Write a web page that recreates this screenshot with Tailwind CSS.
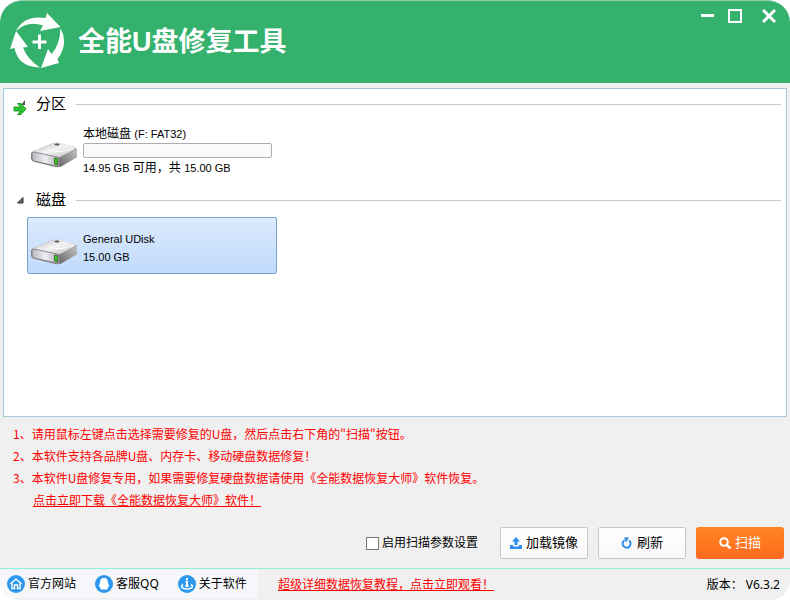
<!DOCTYPE html>
<html lang="zh-CN">
<head>
  <meta charset="utf-8" />
  <meta name="viewport" content="width=device-width,initial-scale=1" />
  <title>全能U盘修复工具</title>
  <script src="https://cdn.jsdelivr.net/npm/@tailwindcss/browser@4"></script>
</head>
<body class="bg-white">

<!-- shared drive icon -->
<svg class="absolute w-0 h-0" aria-hidden="true">
  <defs>
    <linearGradient id="top" x1="0" y1="0" x2="1" y2="1">
      <stop offset="0" stop-color="#bdbdbd" /><stop offset=".5" stop-color="#f4f4f4" /><stop offset="1" stop-color="#b9b9b9" />
    </linearGradient>
    <linearGradient id="side" x1="0" y1="1" x2="1" y2="0">
      <stop offset="0" stop-color="#666" /><stop offset="1" stop-color="#c5c5c5" />
    </linearGradient>
    <linearGradient id="front" x1="0" y1="0" x2="1" y2="0">
      <stop offset="0" stop-color="#b8b8bc" /><stop offset=".5" stop-color="#eeeef4" /><stop offset="1" stop-color="#a9a9ad" />
    </linearGradient>
    <symbol id="drive" viewBox="0 0 48 28">
      <path d="M0 13 Q0 11 3 10 L20 3 Q24 1 28 2 L43 6 Q46 7 46 10 V16 L31 25 Q27 27 24 26 L4 21 Q0 20 0 17Z" fill="#8a8a8a" />
      <path d="M1 11 L20 3 Q25 1 29 2 L43 6 Q46 7 43 9 L29 16 Q26 17 22 16Z" fill="url(#top)" />
      <path d="M28 17 L46 8 V16 L29 26Z" fill="url(#side)" />
      <path d="M1 12 Q1 11 3 11 L26 16 Q28 16 28 18 V24 Q28 26 25 25 L3 20 Q1 19 1 17Z" fill="url(#front)" stroke="#777" stroke-width=".8" />
      <path d="M17 9 Q30 13 43 7" fill="none" stroke="#fff" stroke-width="1" />
      <ellipse cx="26" cy="3.5" rx="2.500" ry="1" fill="#555" />
      <path d="M23.500 17 L26.500 17.500 V24 L23.500 23Z" fill="#3cc026" stroke="#1b4d14" stroke-width=".6" />
    </symbol>
  </defs>
</svg>

<div class="min-h-screen flex flex-col bg-[#f0f0f0] rounded-t-[22px] rounded-b-[20px] overflow-hidden text-xs text-black font-['Liberation_Sans','Noto_Sans_CJK_SC',sans-serif]">

  <header class="h-[83px] shrink-0 flex items-center bg-[#34b16d] border-t border-[#8fd0ac] rounded-t-[22px] pl-2 text-white">
    <svg class="w-[60px] h-[60px]" viewBox="0 0 60 60" fill="currentColor">
      <path d="M8 19 Q16 3 37.500 6 L39 1 L52.500 15 L32 19 L35 13.500 Q20 8 8 19Z" />
      <path d="M52.500 16 Q61 32 49.500 47 L51 51 L33 56 L40 37 L43.500 42 Q52 33 52.500 16Z" />
      <path d="M32 55.500 Q10 55 6.500 36 L2 37 L8 19 L20 35 L15 35.500 Q19 47 32 55.500Z" />
      <path d="M24.500 28.500 H30 V22.500 H33 V28.500 H38.500 V31.500 H33 V37 H30 V31.500 H24.500Z" />
    </svg>
    <h1 class="ml-[10px] text-[27px] leading-8 font-bold">全能U盘修复工具</h1>
    <div class="ml-auto self-start flex items-center gap-3 pr-[11px] pt-1">
      <button class="w-4 h-5" aria-label="最小化"><svg class="w-4 h-5" viewBox="0 0 16 20"><path d="M2 10.500 H15" stroke="#fff" stroke-width="3" /></svg></button>
      <button class="w-4 h-5" aria-label="最大化"><svg class="w-4 h-5" viewBox="0 0 16 20"><path d="M2 5 H14 V17 H2Z" fill="none" stroke="#fff" stroke-width="2" /></svg></button>
      <button class="ml-1 w-5 h-5" aria-label="关闭"><svg class="w-5 h-5" viewBox="0 0 20 20"><path d="M4 5 L16 17 M16 5 L4 17" stroke="#fff" stroke-width="3" /></svg></button>
    </div>
  </header>

  <main class="grow mx-[3px] mt-[5px] bg-white border border-[#a3cbd7]">
    <section>
      <div class="flex items-center h-[30px] pl-2 pr-[5px]">
        <svg class="w-4 h-4 mt-2" viewBox="0 0 16 16">
          <path d="M13 0 V5 H9Z" fill="#555" />
          <path d="M2 7 H8.500 L5.500 3.500 H9 L14 9 L9 14.500 H5.500 L8.500 11 H2Z" fill="#2cc531" stroke="#0c8a12" stroke-width=".8" />
        </svg>
        <h2 class="ml-2 text-[15px]">分区</h2>
        <div class="ml-[10px] grow border-t border-[#c8c8c8]"></div>
      </div>
      <div class="flex items-center h-14 w-[250px] ml-[23px] mt-1 pl-1">
        <svg class="w-12 h-7 mt-2"><use href="#drive" /></svg>
        <div class="ml-1 grow">
          <p class="leading-[18px]">本地磁盘 <span class="text-[11px]">(F: FAT32)</span></p>
          <div class="w-[189px] h-[15px] border border-[#adadad] rounded-xs bg-[#fafafa]"></div>
          <p class="mt-px leading-[18px]"><span class="text-[11px]">14.95 GB</span> 可用，共 <span class="text-[11px]">15.00 GB</span></p>
        </div>
      </div>
    </section>
    <section class="mt-[7px]">
      <div class="flex items-center h-7 pl-2 pr-[5px]">
        <svg class="w-4 h-4" viewBox="0 0 16 16"><path d="M11 5.500 V11 H5.500Z" fill="#666" stroke="#333" stroke-width="1" /></svg>
        <h2 class="ml-2 text-[15px]">磁盘</h2>
        <div class="ml-[10px] grow border-t border-[#c8c8c8]"></div>
      </div>
      <button class="flex items-center h-[57px] w-[250px] ml-[23px] mt-[3px] pl-[3px] text-left text-[11px] border border-[#7da2ce] rounded-xs bg-linear-to-b from-[#dceafd] to-[#c0dafc]">
        <svg class="w-12 h-7 mt-3"><use href="#drive" /></svg>
        <span class="ml-1 mt-1 leading-[18px]">General UDisk<br />15.00 GB</span>
      </button>
    </section>
  </main>

  <section class="pl-[13px] pt-[6px] leading-[22px] text-[#f00] font-['Noto_Sans_CJK_SC',sans-serif]">
    <p>1、请用鼠标左键点击选择需要修复的U盘，然后点击右下角的"扫描"按钮。</p>
    <p>2、本软件支持各品牌U盘、内存卡、移动硬盘数据修复！</p>
    <p>3、本软件U盘修复专用，如果需要修复硬盘数据请使用《全能数据恢复大师》软件恢复。</p>
    <p class="pl-5"><a href="#" class="underline">点击立即下载《全能数据恢复大师》软件！</a></p>
  </section>

  <div class="flex items-center justify-end gap-[10px] pt-4 pb-[9px] pr-[6px] text-[13px]">
    <label class="flex items-center gap-[3px] mr-3 text-xs">
      <input type="checkbox" class="appearance-none w-[13px] h-[13px] bg-white border border-[#777]" />
      启用扫描参数设置
    </label>
    <button class="flex items-center justify-center gap-1 w-[88px] h-8 bg-linear-to-b from-white to-[#f8f8f8] border border-[#c6c8cc] rounded-xs">
      <svg class="w-3 h-3" viewBox="0 0 12 12" fill="#2b8eea"><path d="M6 0 L10 4.500 H7.500 V8 H4.500 V4.500 H2Z" /><path d="M0 8 H3 V9.500 H9 V8 H12 V12 H0Z" /></svg>
      加载镜像
    </button>
    <button class="flex items-center justify-center gap-1 w-[88px] h-8 bg-linear-to-b from-white to-[#f8f8f8] border border-[#c6c8cc] rounded-xs">
      <svg class="w-3 h-3" viewBox="0 0 12 12"><path d="M8.500 3.500 A4 4 0 1 1 4 3.300" transform="translate(-.5 0)" fill="none" stroke="#2b8eea" stroke-width="2" /><path d="M3 0.500 H8 L5 5.500Z" fill="#2b8eea" /></svg>
      刷新
    </button>
    <button class="flex items-center justify-center gap-1 w-[88px] h-8 bg-linear-to-b from-[#ff8420] to-[#ff6a22] rounded-[3px] text-white">
      <svg class="w-3 h-3" viewBox="0 0 12 12" fill="none" stroke="#fff" stroke-width="2"><circle cx="5" cy="5" r="3.800" /><path d="M7.800 7.800 L11.500 11.500" stroke-width="2.600" /></svg>
      扫描
    </button>
  </div>

  <footer class="flex h-8 shrink-0 border-t border-[#8eeed8] font-['Noto_Sans','Noto_Sans_CJK_SC',sans-serif]">
    <nav class="flex items-center gap-[19px] w-[258px] h-7 mt-px pl-[7px] bg-[#f5f7fa]">
      <a href="#" class="flex items-center gap-[3px] whitespace-nowrap">
        <svg class="w-[18px] h-[18px]" viewBox="0 0 18 18" fill="none" stroke="#fff" stroke-width="1.400"><circle cx="9" cy="9" r="9" fill="#2d98ee" stroke="none" /><path d="M3.500 9 L9 4 L14.500 9 M5 8.500 V13.500 H7.500 V10 H10.500 V13.500 H13 V8.500" /></svg>
        官方网站
      </a>
      <a href="#" class="flex items-center gap-[3px] whitespace-nowrap">
        <svg class="w-[18px] h-[18px]" viewBox="0 0 18 18"><circle cx="9" cy="9" r="9" fill="#2d98ee" /><path d="M9 3 C12 3 13 5 13 8 Q14.500 10.500 14 12 L13 11.500 L12.500 14.500 H9.500 L9 14 L8.500 14.500 H5.500 L5 11.500 L4 12 Q3.500 10.500 5 8 C5 5 6 3 9 3Z" fill="#fff" /></svg>
        客服QQ
      </a>
      <a href="#" class="flex items-center gap-[3px] whitespace-nowrap">
        <svg class="w-[18px] h-[18px]" viewBox="0 0 18 18" fill="none" stroke="#fff"><circle cx="9" cy="9" r="9" fill="#2d98ee" stroke="none" /><path d="M9 3 V5 M7.500 6.800 H9 V11 M7.500 11 H10.500" stroke-width="2" /><path d="M5 9.500 C2 11.500 4 14 9 14 S16 11.500 13 9.500" stroke-width="1.600" /></svg>
        关于软件
      </a>
    </nav>
    <a href="#" class="ml-5 self-center text-[#f00] underline">超级详细数据恢复教程，点击立即观看！</a>
    <p class="ml-auto self-center pr-[10px]">版本： V6.3.2</p>
  </footer>
</div>
</body>
</html>
